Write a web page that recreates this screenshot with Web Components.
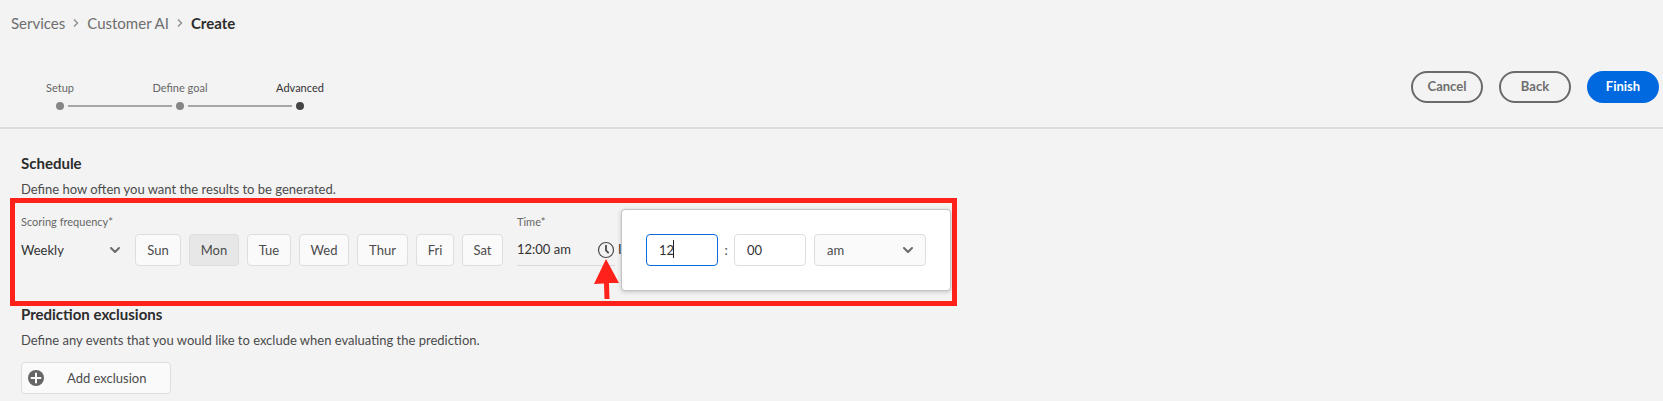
<!DOCTYPE html>
<html lang="en">
<head>
<meta charset="utf-8">
<title>Customer AI – Create</title>
<style>
html, body { margin: 0; min-height: 100%; background: #f3f3f3; }
body { font: 13px/20px Lato, "Noto Sans", sans-serif; color: #4b4b4b; }
</style>
</head>
<body>
<script>
const define = (name, html, setup) => customElements.define(name, class extends HTMLElement {
  connectedCallback() {
    if (this.shadowRoot) return;
    const t = document.createElement('template');
    t.innerHTML = '<style>*{box-sizing:border-box}</style>' + html;
    this.attachShadow({ mode: 'open' }).append(t.content.cloneNode(true));
    if (setup) setup.call(this, this.shadowRoot);
  }
});

define('nav-trail', `
<style>
:host { display: block; padding: 13px 11px 0; font-size: 15px; line-height: 20px; }
ol { display: flex; align-items: center; gap: 7px; margin: 0; padding: 0; list-style: none; }
li { display: flex; align-items: center; gap: 7px; }
a { color: #6e6e6e; text-decoration: none; }
b { color: #2c2c2c; }
svg { width: 8px; height: 10px; fill: none; stroke: #8e8e8e; stroke-width: 1.4; }
</style>
<nav aria-label="Breadcrumb"><ol>
<li><a href="#services">Services</a><svg viewBox="0 0 8 10"><path d="M2 1.5 5.5 5 2 8.5"/></svg></li>
<li><a href="#customer-ai">Customer AI</a><svg viewBox="0 0 8 10"><path d="M2 1.5 5.5 5 2 8.5"/></svg></li>
<li><b aria-current="page">Create</b></li>
</ol></nav>`);

define('step-list', `
<style>
:host { display: block; font-size: 11px; line-height: 16px; }
.steps { display: grid; grid-template-columns: repeat(3, 120px); }
</style>
<div class="steps" role="list"><slot></slot></div>`);

define('step-item', `
<style>
:host { display: grid; justify-items: center; gap: 6px; color: #666; }
:host([current]) { color: #323232; }
.rail { display: grid; grid-template-columns: 1fr 8px 1fr; gap: 4px; align-items: center; width: 100%; }
.rail::before, .rail::after { content: ""; height: 2px; background: #a6a6a6; }
:host([first]) .rail::before, :host([current]) .rail::after { visibility: hidden; }
i { width: 8px; height: 8px; border-radius: 50%; background: #868686; }
:host([current]) i { background: #444; }
</style>
<span><slot></slot></span><div class="rail"><i></i></div>`);

define('pill-button', `
<style>
:host { display: block; }
button { width: 72px; height: 32px; padding: 0 0 2px; border: 2px solid #6a6a6a; border-radius: 16px; background: none; color: #6e6e6e; font: bold 13px/20px Lato, sans-serif; }
:host([primary]) button { background: #0069e0; border-color: #0069e0; color: #fff; }
</style>
<button type="button"><slot></slot></button>`);

define('page-header', `
<style>
:host { display: flex; justify-content: space-between; align-items: flex-start; padding: 38px 4px 17px 0; border-bottom: 2px solid #dcdcdc; }
.steps { padding-top: 9px; }
.actions { display: flex; gap: 16px; }
</style>
<div class="steps"><slot name="steps"></slot></div><div class="actions"><slot></slot></div>`);

define('form-section', `
<style>
:host { display: block; padding: 0 21px; }
h2 { margin: 0 0 6px; font-size: 15px; line-height: 20px; color: #2c2c2c; }
p { margin: 0; line-height: 20px; }
</style>
<h2><slot name="title"></slot></h2><p><slot name="text"></slot></p><slot></slot>`);

define('pick-list', `
<style>
:host { display: block; position: relative; }
select { appearance: none; display: block; width: 100%; height: 32px; margin: 0; padding: 0; border: 0; background: none; color: #323232; font: 13px/20px Lato, sans-serif; outline: 0; }
:host([boxed]) select { padding: 0 12px; border: 1px solid #dedede; border-radius: 4px; background: #fafafa; color: #4b4b4b; }
svg { position: absolute; right: 0; top: 12px; width: 12px; height: 8px; fill: none; stroke: #6a6a6a; stroke-width: 2; stroke-linecap: round; stroke-linejoin: round; pointer-events: none; }
:host([boxed]) svg { right: 12px; }
</style>
<select></select><svg viewBox="0 0 12 8"><path d="M2 2l4 4 4-4"/></svg>`,
function (root) {
  const s = root.querySelector('select');
  s.setAttribute('aria-label', this.getAttribute('label'));
  for (const o of this.getAttribute('options').split(',')) s.add(new Option(o));
});

define('day-picker', `
<style>
:host { display: grid; grid-template-columns: 46px 50px 44px 50px 51px 38px 41px; gap: 8px; }
button { height: 32px; padding: 0; border: 1px solid #dedede; border-radius: 4px; background: #fafafa; color: #4b4b4b; font: 13px/20px Lato, sans-serif; }
button[aria-pressed=true] { background: #e7e7e7; }
</style>`,
function (root) {
  for (const d of ['Sun', 'Mon', 'Tue', 'Wed', 'Thur', 'Fri', 'Sat']) {
    const b = document.createElement('button');
    b.type = 'button';
    b.textContent = d;
    b.setAttribute('aria-pressed', d === 'Mon');
    root.append(b);
  }
});

define('time-popover', `
<style>
:host { display: flex; align-items: center; padding: 24px; background: #fff; border: 1px solid #c4c4c4; border-radius: 4px; box-shadow: 0 1px 4px rgba(0,0,0,.2); }
.box { position: relative; }
input { display: block; width: 72px; height: 32px; padding: 0 12px 1px; border: 1px solid #dedede; border-radius: 4px; background: #fff; color: #323232; font: 13px/20px Lato, sans-serif; outline: 0; }
.active input { border-color: #0a6be0; }
.caret { position: absolute; left: 27px; top: 6px; width: 1px; height: 18px; background: #222; }
.colon { width: 16px; text-align: center; }
pick-list { width: 112px; margin-left: 8px; }
</style>
<div class="box active"><input aria-label="Hour" value="12"><span class="caret"></span></div>
<span class="colon">:</span>
<div class="box"><input aria-label="Minute" value="00"></div>
<pick-list boxed label="am or pm" options="am,pm"></pick-list>`);

define('time-field', `
<style>
:host { display: block; position: relative; }
.line { display: flex; align-items: center; justify-content: space-between; width: 98px; height: 32px; border-bottom: 1px solid #dadada; }
label { display: block; margin-bottom: 4px; font-size: 11px; line-height: 16px; color: #666; }
input { width: 72px; padding: 0 0 2px; border: 0; background: none; color: #323232; font: 13px/20px Lato, sans-serif; }
button { display: block; width: 18px; height: 18px; padding: 0; border: 0; background: none; }
svg { display: block; overflow: visible; fill: none; stroke: #4b4b4b; }
.zone { position: absolute; left: 101px; top: 25px; color: #323232; }
.arrow { position: absolute; left: 77px; top: 45px; fill: #ff221a; stroke: none; }
time-popover { position: absolute; left: 104px; top: -5px; }
</style>
<label for="t">Time*</label>
<div class="line"><input id="t" value="12:00 am"><button type="button" aria-label="Choose time"><svg width="18" height="18" viewBox="0 0 18 18"><circle cx="9" cy="9" r="7.5" stroke-width="1.2"/><path d="M9 4v5.5l2.7 2.7" stroke-width="1.8"/></svg></button></div>
<span class="zone">I</span>
<svg class="arrow" width="26" height="41" viewBox="0 0 26 41"><path d="M12 0 25 24 15 24 15.500 40 10.500 40 10 24.500 0 25Z"/></svg>
<time-popover></time-popover>`);

define('schedule-controls', `
<style>
:host { display: block; width: 947px; max-width: 100%; margin: -1px 0 0 -11px; padding: 11px 6px 35px; border: 5px solid #ff221a; }
.row { display: flex; align-items: flex-end; }
.frequency { width: 100px; margin-right: 14px; }
.name { display: block; margin-bottom: 4px; font-size: 11px; line-height: 16px; color: #666; white-space: nowrap; }
time-field { margin-left: 14px; }
</style>
<div class="row">
<div class="frequency"><span class="name">Scoring frequency*</span><pick-list label="Scoring frequency" options="Weekly,Daily,Monthly"></pick-list></div>
<day-picker></day-picker>
<time-field></time-field>
</div>`);

define('add-button', `
<style>
:host { display: block; margin-top: 12px; padding-bottom: 7px; }
button { display: flex; align-items: center; width: 150px; height: 32px; padding: 0 6px; gap: 23px; border: 1px solid #dedede; border-radius: 4px; background: #fafafa; color: #4b4b4b; font: 13px/20px Lato, sans-serif; white-space: nowrap; }
</style>
<button type="button"><svg width="16" height="16" viewBox="0 0 16 16"><circle cx="8" cy="8" r="8" fill="#666"/><path d="M8 3.5v9M3.5 8h9" stroke="#fff" stroke-width="2" stroke-linecap="round"/></svg><slot></slot></button>`);

define('create-page', `
<style>
:host { display: block; }
.schedule { margin-top: 24px; }
.exclusions { margin-top: -2px; }
</style>
<nav-trail></nav-trail>
<page-header>
<step-list slot="steps"><step-item first role="listitem">Setup</step-item><step-item role="listitem">Define goal</step-item><step-item current role="listitem">Advanced</step-item></step-list>
<pill-button>Cancel</pill-button><pill-button>Back</pill-button><pill-button primary>Finish</pill-button>
</page-header>
<form-section class="schedule"><span slot="title">Schedule</span><span slot="text">Define how often you want the results to be generated.</span><schedule-controls></schedule-controls></form-section>
<form-section class="exclusions"><span slot="title">Prediction exclusions</span><span slot="text">Define any events that you would like to exclude when evaluating the prediction.</span><add-button>Add exclusion</add-button></form-section>`);
</script>
<create-page></create-page>
</body>
</html>
